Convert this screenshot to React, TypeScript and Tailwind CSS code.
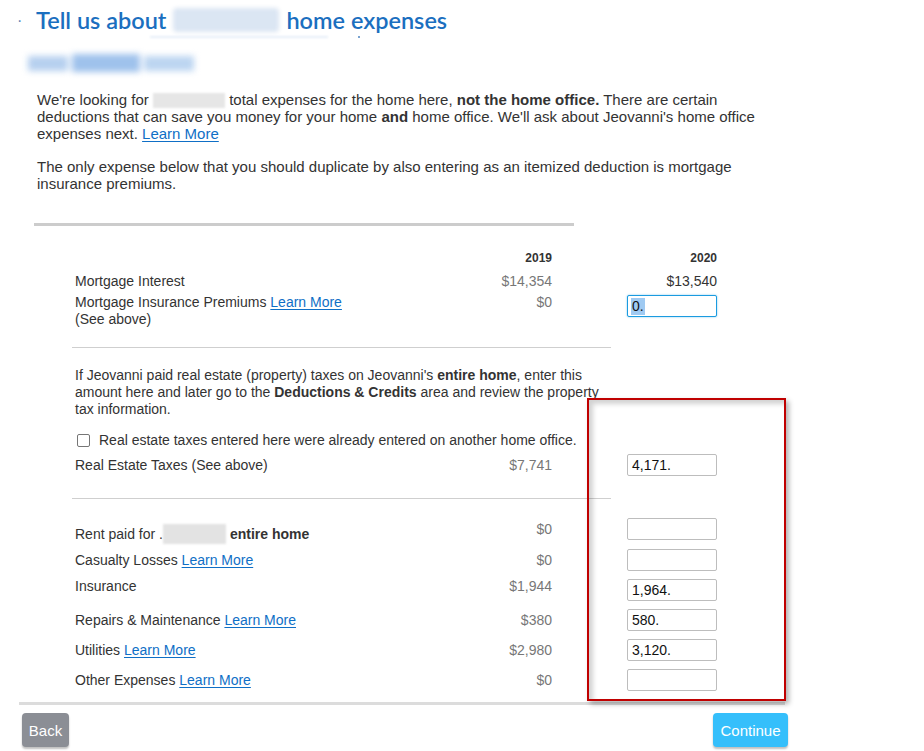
import React from 'react'

const LINK = 'text-[#0f6fc6] underline underline-offset-[2px]'

function Field({ value, w = 'w-[90px]' }: { value?: string; w?: string }) {
    return (
        <div className={`${w} h-[22px] border border-[#bdbdbd] rounded-[2px] bg-white flex items-center px-[4px] text-[14px] text-[#111]`}>
            {value}
        </div>
    )
}

function Row({
    label,
    prior,
    field,
    h = 'h-[30px]',
    labelClass = '',
    priorClass = '',
}: {
    label: React.ReactNode
    prior: string
    field: React.ReactNode
    h?: string
    labelClass?: string
    priorClass?: string
}) {
    return (
        <div className={`grid grid-cols-[397px_80px_165px] items-center ${h}`}>
            <div className={labelClass}>{label}</div>
            <div className={`text-right text-[#777] ${priorClass}`}>{prior}</div>
            <div className="flex justify-end">{field}</div>
        </div>
    )
}

export default function App() {
    return (
        <div className="relative w-[924px] h-[751px] overflow-hidden bg-white text-[14px] leading-[17px] text-[#333]" style={{ fontFamily: '"Liberation Sans", Arial, sans-serif' }}>
            {/* header */}
            <div className="flex items-center pl-[17px] pt-[6px] h-[34px]">
                <span className="text-[#5d86b5] text-[16px] w-[19px]">·</span>
                <h1 className="text-[23.5px] leading-[28px] font-semibold text-[#1b6fbf] flex items-center" style={{ fontFamily: 'Lato, "Open Sans", sans-serif' }}>
                    Tell us about
                    <span className="inline-block mx-[7px] w-[106px] h-[24px] bg-[#dbe6f3] blur-[2px] rounded-sm" />
                    home expenses
                </h1>
            </div>
            <div className="flex items-center h-[6px]">
                <div className="ml-[150px] w-[178px] h-[2px] bg-[#e6eef8] blur-[1px]" />
                <div className="ml-[30px] w-[2px] h-[2px] bg-[#7aa3d0]" />
            </div>
            <div className="ml-[28px] mt-[10px] flex items-center gap-[4px] h-[26px] blur-[3px]">
                <div className="w-[40px] h-[15px] bg-[#b6d0ef]" />
                <div className="w-[68px] h-[18px] bg-[#9fc2ec]" />
                <div className="w-[50px] h-[15px] bg-[#bcd5f1]" />
            </div>

            {/* intro */}
            <div className="pl-[37px] w-[762px] mt-[15px] text-[15px]">
                <p>
                    We're looking for <span className="inline-block align-[-3px] w-[72px] h-[15px] bg-[#e6e6e6] blur-[1px]" /> total expenses for the home here, <b>not the home office.</b> There are certain deductions that can save you money for your home <b>and</b> home office. We'll ask about Jeovanni's home office expenses next.{' '}
                    <a className={LINK}>Learn More</a>
                </p>
                <p className="mt-[16px]">
                    The only expense below that you should duplicate by also entering as an itemized deduction is mortgage insurance premiums.
                </p>
            </div>

            <div className="ml-[34px] w-[540px] h-[3px] bg-[#cccccc] mt-[31px]" />

            {/* table */}
            <div className="ml-[75px] w-[642px] mt-[24px]">
                <div className="grid grid-cols-[397px_80px_165px] text-[12px] leading-[16px] font-bold text-[#333]">
                    <div />
                    <div className="text-right">2019</div>
                    <div className="text-right">2020</div>
                </div>
                <div className="grid grid-cols-[397px_80px_165px] mt-[7px]">
                    <div>Mortgage Interest</div>
                    <div className="text-right text-[#777]">$14,354</div>
                    <div className="text-right">$13,540</div>
                </div>
                <div className="grid grid-cols-[397px_80px_165px] mt-[4px] h-[46px]">
                    <div>
                        Mortgage Insurance Premiums <a className={LINK}>Learn More</a>
                        <br />
                        (See above)
                    </div>
                    <div className="text-right text-[#777]">$0</div>
                    <div className="flex justify-end pt-[1px]">
                        <div className="w-[90px] h-[22px] border border-[#1a9be0] rounded-[2px] bg-white flex items-center px-[3px] shadow-[0_0_2px_rgba(26,155,224,0.6)]">
                            <span className="bg-[#9fcaf2] text-[#111] px-[1px]">0.</span>
                        </div>
                    </div>
                </div>
            </div>

            <div className="ml-[72px] w-[539px] h-px bg-[#cfcfcf] mt-[7px]" />

            <div className="ml-[75px] w-[642px] mt-[19px]">
                <p className="w-[540px]">
                    If Jeovanni paid real estate (property) taxes on Jeovanni's <b>entire home</b>, enter this amount here and later go to the <b>Deductions &amp; Credits</b> area and review the property tax information.
                </p>
                <div className="flex items-center mt-[14px] h-[17px]">
                    <div className="ml-[2px] w-[13px] h-[13px] border border-[#767676] rounded-[2px] bg-white" />
                    <span className="ml-[9px]">Real estate taxes entered here were already entered on another home office.</span>
                </div>
                <Row label="Real Estate Taxes (See above)" prior="$7,741" field={<Field value="4,171." />} h="h-[24px] mt-[4px]" />
            </div>

            <div className="ml-[72px] w-[539px] h-px bg-[#cfcfcf] mt-[21px]" />

            <div className="ml-[75px] w-[642px] mt-[15px]">
                <Row
                    label={
                        <span className="flex items-center">
                            Rent paid for&nbsp;.<span className="inline-block w-[63px] h-[20px] bg-[#e3e3e3] blur-[1px] mr-[4px]" />
                            <b>entire home</b>
                        </span>
                    }
                    labelClass="pt-[10px]"
                    prior="$0"
                    field={<Field />}
                    h="h-[24px]"
                />
                <Row label={<>Casualty Losses <a className={LINK}>Learn More</a></>} prior="$0" field={<Field />} h="h-[30px] mt-[7px]" />
                <Row label="Insurance" prior="$1,944" field={<Field value="1,964." />} labelClass="pb-[8px]" priorClass="pb-[8px]" />
                <Row label={<>Repairs &amp; Maintenance <a className={LINK}>Learn More</a></>} prior="$380" field={<Field value="580." />} />
                <Row label={<>Utilities <a className={LINK}>Learn More</a></>} prior="$2,980" field={<Field value="3,120." />} />
                <Row label={<>Other Expenses <a className={LINK}>Learn More</a></>} prior="$0" field={<Field />} />
            </div>

            <div className="ml-[19px] w-[766px] h-[3px] bg-[#dcdcdc] mt-[7px]" />

            {/* footer buttons */}
            <div className="flex justify-between mt-[8px] pl-[22px] w-[788px]">
                <button className="w-[47px] h-[34px] rounded-[4px] bg-[#8b8e95] text-white text-[15px] shadow-[0_2px_2px_rgba(0,0,0,0.25)]">Back</button>
                <button className="w-[75px] h-[34px] rounded-[4px] bg-[#35bffb] text-white text-[15px] shadow-[0_2px_2px_rgba(0,0,0,0.25)]">Continue</button>
            </div>

            {/* highlight box */}
            <div className="absolute left-[587px] top-[398px] w-[199px] h-[303px] border-2 border-[#c00000] pointer-events-none shadow-[3px_3px_5px_rgba(0,0,0,0.3),inset_4px_4px_5px_rgba(0,0,0,0.18)]" />
        </div>
    )
}
